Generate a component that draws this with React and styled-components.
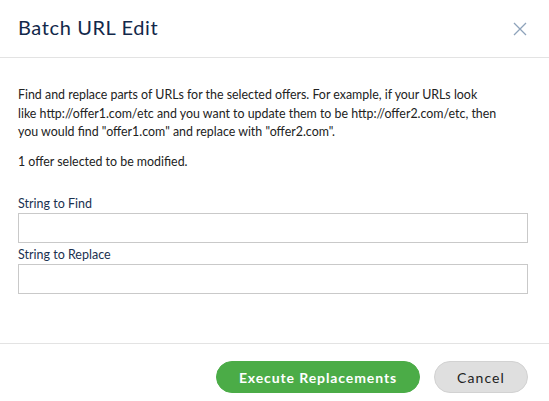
import React from "react";
import styled, { createGlobalStyle } from "styled-components";

const Global = createGlobalStyle`
  html, body { margin: 0; padding: 0; background: #ffffff; }
  body { font-family: Lato, "Noto Sans", sans-serif; }
`;

const Modal = styled.div`
  width: 549px;
  height: 401px;
  background: #fff;
  display: flex;
  flex-direction: column;
  box-sizing: border-box;
`;

const Header = styled.div`
  height: 58px;
  box-sizing: border-box;
  padding: 0 22px 0 18px;
  display: flex;
  align-items: center;
  justify-content: space-between;
  border-bottom: 1px solid #e3e3e3;
`;

const Title = styled.h2`
  margin: 0 0 3px 0;
  font-size: 20px;
  font-weight: 400;
  color: #12284a;
  letter-spacing: 0.6px;
`;

const Close = styled.button`
  border: none;
  background: none;
  padding: 0;
  width: 14px;
  height: 14px;
  display: flex;
  cursor: pointer;
`;

const Body = styled.div`
  flex: 1;
  padding: 28px 21px 0 18px;
  color: #222;
`;

const Text = styled.p`
  margin: 0 0 ${(p) => p.gap || 0}px 0;
  max-width: 492px;
  font-size: 12.4px;
  line-height: 18.5px;
`;

const Label = styled.label`
  display: block;
  font-size: 12.5px;
  color: #1a3150;
  line-height: 15px;
  margin-bottom: 2px;
`;

const Input = styled.input`
  display: block;
  width: 100%;
  height: 30px;
  box-sizing: border-box;
  border: 1px solid #c9c9c9;
  margin: 0 0 ${(p) => p.gap || 0}px 0;
  font-family: inherit;
  font-size: 13px;
  padding: 0 8px;
`;

const Footer = styled.div`
  height: 58px;
  box-sizing: border-box;
  border-top: 1px solid #e3e3e3;
  display: flex;
  justify-content: flex-end;
  align-items: flex-start;
  gap: 14px;
  padding: 17px 21px 0 0;
`;

const Button = styled.button`
  height: 32px;
  width: ${(p) => p.w}px;
  border-radius: 16px;
  font-family: inherit;
  font-size: 14px;
  font-weight: ${(p) => (p.primary ? 700 : 400)};
  letter-spacing: ${(p) => (p.primary ? 0.9 : 1.1)}px;
  cursor: pointer;
  background: ${(p) => (p.primary ? "#4bac47" : "#dfdfdf")};
  color: ${(p) => (p.primary ? "#ffffff" : "#222222")};
  border: 1px solid ${(p) => (p.primary ? "#4bac47" : "#d2d2d2")};
`;

export default function App() {
  return (
    <Modal>
      <Global />
      <Header>
        <Title>Batch URL Edit</Title>
        <Close aria-label="Close">
          <svg width="14" height="14" viewBox="0 0 14 14">
            <path d="M1 1L13 13M13 1L1 13" stroke="#8ea3bb" strokeWidth="1.3" />
          </svg>
        </Close>
      </Header>
      <Body>
        <Text gap={11}>
          Find and replace parts of URLs for the selected offers. For example, if your URLs look
          <br />
          like http://offer1.com/etc and you want to update them to be http://offer2.com/etc, then
          you would find "offer1.com" and replace with "offer2.com".
        </Text>
        <Text gap={25}>1 offer selected to be modified.</Text>
        <Label>String to Find</Label>
        <Input gap={4} />
        <Label>String to Replace</Label>
        <Input />
      </Body>
      <Footer>
        <Button primary w={204}>Execute Replacements</Button>
        <Button w={94}>Cancel</Button>
      </Footer>
    </Modal>
  );
}
